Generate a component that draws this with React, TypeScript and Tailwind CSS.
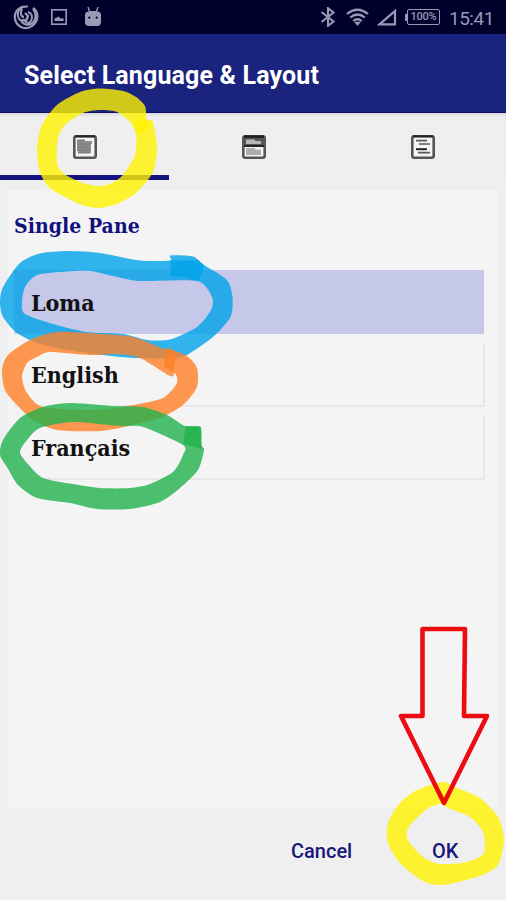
import type { ReactNode } from "react";

type Point = [number, number];

// Closed smooth curve through every point
function loop(points: Point[]) {
    const n = points.length;
    let d = `M${points[0][0]} ${points[0][1]}`;
    for (let i = 0; i < n; i++) {
        const a = points[(i + n - 1) % n];
        const b = points[i];
        const c = points[(i + 1) % n];
        const e = points[(i + 2) % n];
        d += `C${b[0] + (c[0] - a[0]) / 8} ${b[1] + (c[1] - a[1]) / 8} ${c[0] - (e[0] - b[0]) / 8} ${c[1] - (e[1] - b[1]) / 8} ${c[0]} ${c[1]}`;
    }
    return d + "Z";
}

const markers: { color: string; outer: Point[]; inner: Point[]; overlap?: string }[] = [
    {
        color: "#fff200",
        outer: [[100, 88.5], [123, 91], [136, 97], [145, 106], [147, 120], [153, 122], [157, 148], [153, 172], [137, 192], [117, 204], [97, 208], [77, 203], [50, 188], [40, 172], [37, 148], [42, 125], [57, 105], [80, 92]],
        inner: [[100, 110], [117, 112], [130, 122], [136, 135], [135, 155], [123, 175], [110, 184], [97, 186], [80, 182], [63, 173], [57, 163], [58, 138], [65, 125], [83, 113]],
        overlap: "M135 122l6-5 6 3 5 2-8 10-8 2z",
    },
    {
        color: "#00a2e8",
        outer: [[67, 251], [100, 253], [140, 260.5], [170, 260.5], [170.5, 255.5], [193, 256.5], [204, 265], [227, 280], [232.5, 297], [230.5, 317], [213, 337], [187, 355], [175, 358], [133, 358], [80, 352], [40, 344], [17, 333], [3, 317], [0, 303], [3, 287], [20, 263], [40, 253.5]],
        inner: [[67, 271.5], [90, 271], [113, 276], [140, 281], [197, 281], [212, 297], [211, 310], [197, 327], [170, 339.5], [147, 340], [123, 334], [87, 332], [53, 324], [25, 314], [22, 303], [25, 287], [37, 275]],
        overlap: "M170.5 260.5H198L204 265L203 272L198 281L185 277L170.5 276Z",
    },
    {
        color: "#ff7f27",
        outer: [[57, 332], [100, 334], [133, 337], [164, 349], [167, 348], [187, 356], [197, 368], [197, 387], [183, 405], [160, 418], [133, 425], [100, 431], [57, 430], [33, 420], [17, 405], [5, 390], [2, 370], [8, 355], [30, 340]],
        inner: [[50, 352], [90, 355], [117, 354], [140, 358], [170, 376], [175, 373], [177, 383], [163, 398], [133, 405], [93, 410], [43, 407], [27, 393], [22, 377], [27, 363], [37, 357]],
        overlap: "M167 348L177 353L173 372L164 367Z",
    },
    {
        color: "#22b14c",
        outer: [[70, 403], [113, 406], [143, 407], [167, 415], [185, 426], [200.5, 427], [201.5, 445], [204, 450], [198, 470], [180, 488], [160, 502], [130, 509], [97, 509], [70, 503], [37, 498], [18, 485], [7, 467], [0, 455], [3, 440], [20, 418], [43, 407]],
        inner: [[40, 428], [73, 422], [120, 426], [143, 427], [183, 445], [183, 455], [173, 472], [150, 484], [130, 488], [100, 488], [73, 484], [43, 478], [27, 463], [20, 452], [27, 440]],
        overlap: "M186 426L200.5 427L201.5 449L183 444Z",
    },
    {
        color: "#fff200",
        outer: [[443, 782], [457, 788], [480, 798], [498, 817], [504, 840], [498, 865], [480, 876], [443, 885], [423, 881], [400, 863], [388, 843], [388, 823], [400, 803], [417, 790]],
        inner: [[448, 808], [470, 817], [483, 832], [484, 853], [467, 862], [440, 864], [423, 857], [408, 840], [408, 828], [420, 815], [430, 807], [442, 804]],
    },
];

const languages = [
    { name: "Loma", selected: true },
    { name: "English", selected: false },
    { name: "Français", selected: false },
];

function PaneIcon({ children }: { children: ReactNode }) {
    return (
        <svg className="h-6 w-6" viewBox="0 0 24 24" fill="none">
            <rect x="1.3" y="1.3" width="21.4" height="21.4" rx="2" fill="#f4f4f4" stroke="#555" strokeWidth="2.6" />
            <path d="M2 1.3h20" stroke="#252525" strokeWidth="2" />
            {children}
        </svg>
    );
}

function StatusBar() {
    return (
        <div className="flex h-[34px] items-center bg-[#00002c] text-[#9a9ab4]">
            <svg className="ml-[13px] h-[26px] w-[26px]" viewBox="0 0 26 26" fill="none" stroke="currentColor">
                <path d="M11 2.5C3 4 0 11 3 18c3 6 11 8 16 4 7-5 7-14 1-18" strokeWidth="2.2" />
                <path d="M15 2.5c-7-.5-11 4-10 10 1 4 4 5 7 3M9 5c-2 4-1 8 2 8M20 5c4 5 3 12-2 15-4 2-8 0-10-3M15 8c4 1 5 5 3 9-2 3-5 2-6 0" strokeWidth="2" />
                <path d="M12 9l3 3-2 5-4-1" strokeWidth="2.4" />
            </svg>
            <svg className="ml-3 h-4 w-4" viewBox="0 0 16 16" fill="none">
                <rect x=".8" y=".8" width="14.4" height="14.4" stroke="currentColor" strokeWidth="1.6" />
                <path d="M3.5 12V9.5L6 8.5l1.5-1 2 2 3-.2V12z" fill="currentColor" />
            </svg>
            <svg className="ml-[17px] h-5 w-[18px]" viewBox="0 0 18 20">
                <path d="M4 0l1.6 4.7h6.8L14 0" fill="none" stroke="currentColor" strokeWidth="1.4" />
                <path d="M1 6.5Q2 4.5 5 4.5h8q3 0 4 2V15q0 4-4 4H5q-4 0-4-4z" fill="currentColor" />
                <circle cx="5.3" cy="10.7" r="1.1" fill="#00002c" />
                <circle cx="12.7" cy="10.7" r="1.1" fill="#00002c" />
            </svg>
            <svg className="ml-auto h-[20px] w-[16px]" viewBox="0 0 16 20" fill="none" stroke="currentColor" strokeWidth="2.1">
                <path d="M1.5 5L13.5 14.5L8 18.8V1.2L13.5 5.5L1.5 15" />
            </svg>
            <svg className="ml-[10px] h-[19px] w-[23px]" viewBox="0 0 23 19" fill="none" stroke="currentColor" strokeWidth="2.2">
                <path d="M1 6Q11.5-2.5 22 6M4.2 9.5q7.3-6 14.6 0M7.2 13q4.3-3.5 8.6 0" />
                <path d="M8 13.8h7L11.5 18z" fill="currentColor" stroke="none" />
            </svg>
            <svg className="ml-[8px] h-[17px] w-[20px]" viewBox="0 0 20 17" fill="none" stroke="currentColor" strokeWidth="2.2">
                <path d="M2.5 15.3H18V2z" />
            </svg>
            <div className="ml-[8px] flex items-center">
                <div className="h-[7px] w-[2px] bg-[#9a9ab4]" />
                <div className="flex h-4 w-[33px] items-center justify-center rounded-[2px] border-[1.5px] border-[#9a9ab4] font-[Roboto] text-[11px] font-medium tracking-[-0.2px]">
                    100%
                </div>
            </div>
            <div className="ml-[9px] mr-[12px] w-[45px] whitespace-nowrap pt-[3px] font-[Roboto] text-[19px] leading-none tracking-[-0.5px]">15:41</div>
        </div>
    );
}

export default function App() {
    return (
        <div className="relative flex h-[900px] w-[506px] flex-col overflow-hidden bg-[#efefef] font-[Roboto,sans-serif]">
            <StatusBar />

            <header className="flex h-[79px] items-center border-b border-[#10106a] bg-[#1a237e] pl-6 pt-1">
                <h1 className="whitespace-nowrap text-[25px] font-bold leading-none tracking-[0.14px] text-white">Select Language &amp; Layout</h1>
            </header>

            {/* Layout tabs */}
            <nav className="grid h-[67px] shrink-0 grid-cols-3 shadow-[inset_0_3px_3px_-1px_#d8d8df]">
                <div className="flex justify-center border-b-[5px] border-[#11117f] pl-px pt-[22px]">
                    <PaneIcon>
                        <path d="M4 4.5h8v1.5h7V9h-1v9H5v-2H4z" fill="#8d8d8d" />
                        <path d="M5 5.5h6M5 9h12M5 12h10M5 15h12M5 18h12" stroke="#777" />
                    </PaneIcon>
                </div>
                <div className="flex justify-center pl-[2px] pt-[22px]">
                    <PaneIcon>
                        <path d="M2 2h20v9H2z" fill="#555" />
                        <path d="M2 2h20M2 11h20" stroke="#242424" strokeWidth="2" />
                        <path d="M4 4.5h9V6h6v3H4z" fill="#b5b5b5" />
                        <path d="M4 13h9v1.5h6V20H4z" fill="#adadad" />
                    </PaneIcon>
                </div>
                <div className="flex justify-center pl-[2px] pt-[22px]">
                    <PaneIcon>
                        <path d="M5 5.7h11M8 9h11M7 17.7h12" stroke="#595959" strokeWidth="1.7" />
                        <path d="M5 14.2h11" stroke="#222" strokeWidth="2" />
                    </PaneIcon>
                </div>
            </nav>

            <main className="mx-2 mt-[10px] h-[618px] shrink-0 bg-[#f4f4f4] pl-[6px] pr-[13px] font-['DejaVu_Serif_Condensed','DejaVu_Serif',serif] font-bold">
                <h2 className="h-20 pt-[22px] text-[21px] leading-7 tracking-[0.05px] text-[#11117c]">Single Pane</h2>
                <div className="flex flex-col gap-[9px]">
                    {languages.map((language) => (
                        <div
                            key={language.name}
                            className={`flex h-16 items-center pl-[17px] text-[23px] leading-none text-[#111] ${language.selected ? "mr-px bg-[#c5c8e8]" : "border-b-2 border-r-2 border-[#e8e8e8]"}`}
                        >
                            {language.name}
                        </div>
                    ))}
                </div>
            </main>

            <footer className="flex h-[92px] items-start pt-[33px] text-[20px] font-medium leading-5 text-[#17177c]">
                <button className="ml-[291px] w-[61px] text-left">Cancel</button>
                <button className="ml-20 w-[27px] text-left">OK</button>
            </footer>

            {/* Hand-drawn callouts over the screen */}
            <svg className="pointer-events-none absolute inset-0" width="506" height="900" viewBox="0 0 506 900">
                {markers.map((marker, index) => (
                    <g key={index} fill={marker.color} fillOpacity="0.8">
                        <path fillRule="evenodd" d={loop(marker.outer) + loop(marker.inner)} />
                        {marker.overlap && <path d={marker.overlap} />}
                    </g>
                ))}
                <path d="M422.5 629H465L464 716H487L444 803L401 716H422.5Z" fill="none" stroke="#ed0b12" strokeWidth="4.6" strokeLinejoin="round" />
            </svg>
        </div>
    );
}
